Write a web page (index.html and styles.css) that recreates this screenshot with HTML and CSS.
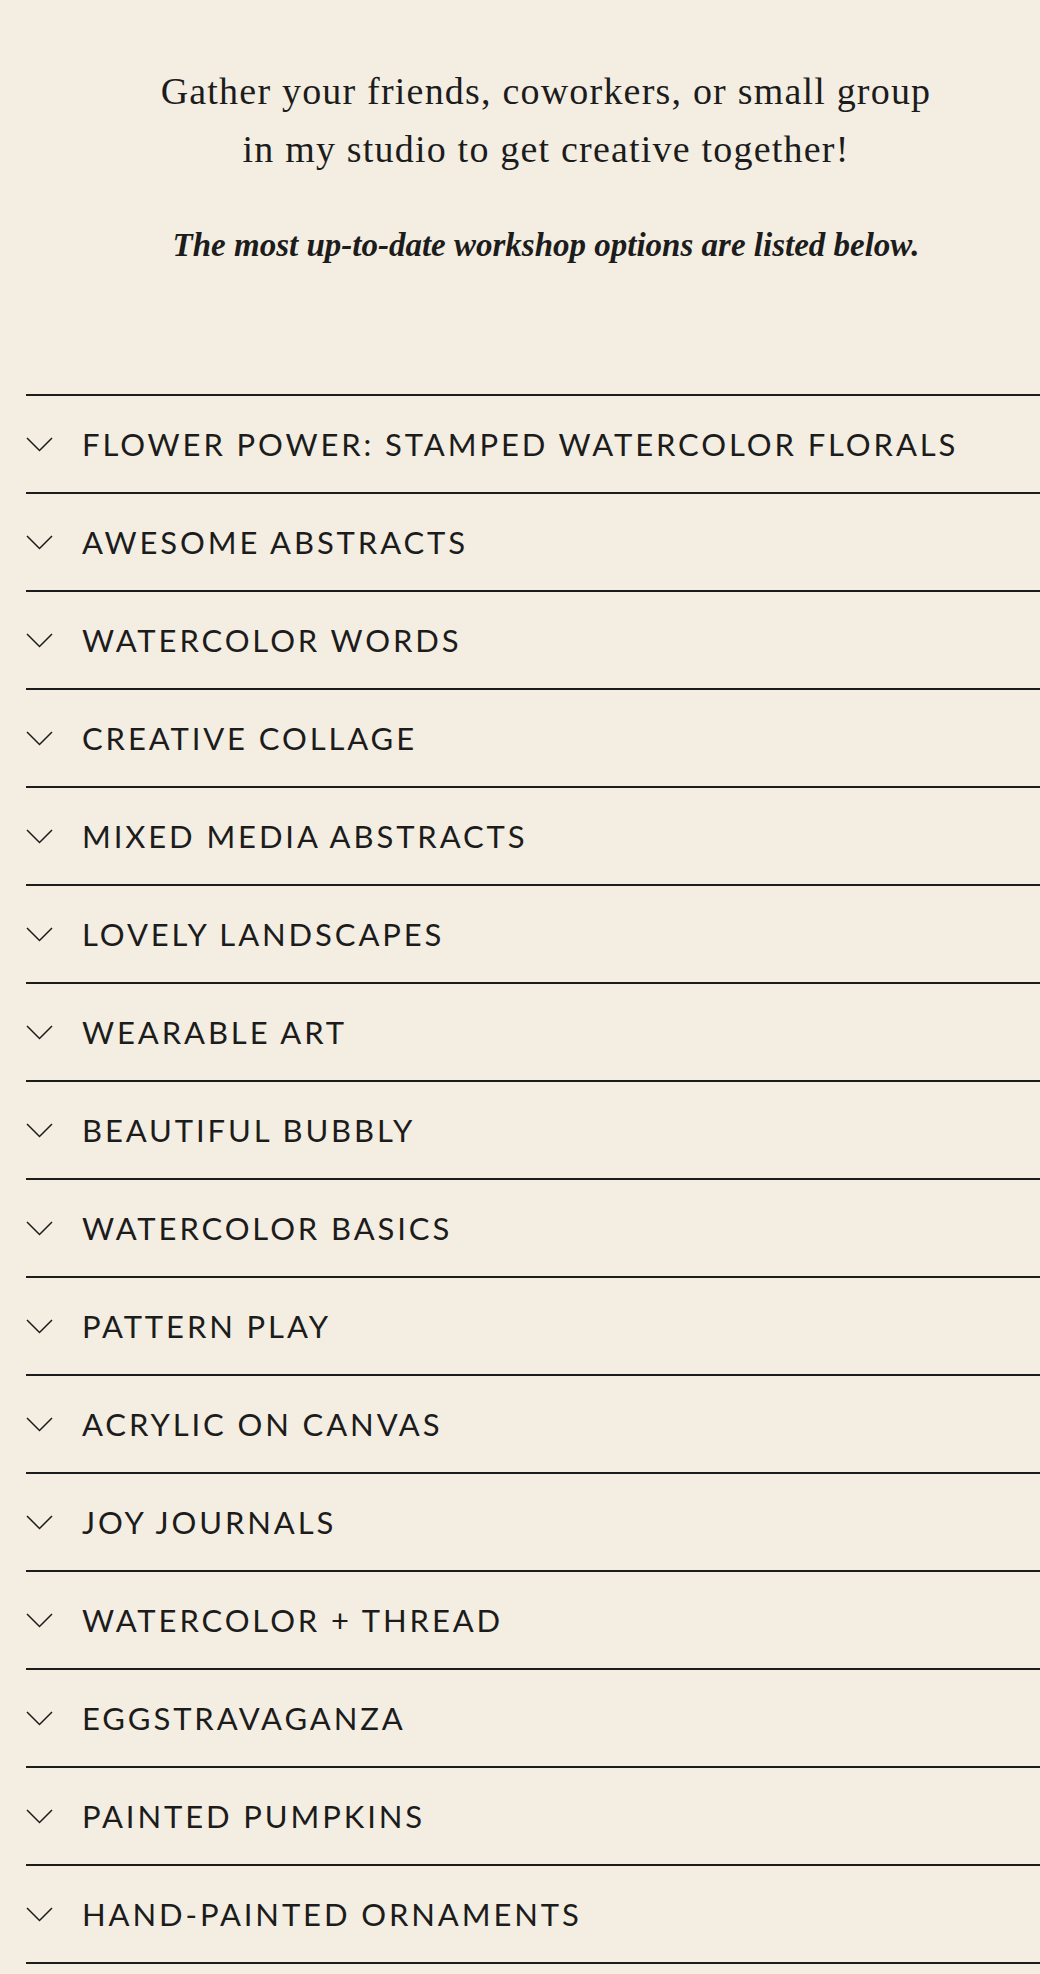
FILE: index.html
```html
<!DOCTYPE html>
<html lang="en">
<head>
  <meta charset="UTF-8" />
  <meta name="viewport" content="width=device-width, initial-scale=1.0" />
  <title>Group Workshops</title>
  <link rel="stylesheet" href="styles.css">
</head>
<body>
  <div class="page">
    <section class="intro">
      <p class="lead">Gather your friends, coworkers, or small group<br>in my studio to get creative together!</p>
      <p class="note">The most up-to-date workshop options are listed below.</p>
    </section>

    <ul class="workshops">
      <li class="workshop"><svg class="chevron" viewBox="0 0 27 15"><polyline points="1,1 13.5,13.5 26,1" /></svg><span>Flower Power: Stamped Watercolor Florals</span></li>
      <li class="workshop"><svg class="chevron" viewBox="0 0 27 15"><polyline points="1,1 13.5,13.5 26,1" /></svg><span>Awesome Abstracts</span></li>
      <li class="workshop"><svg class="chevron" viewBox="0 0 27 15"><polyline points="1,1 13.5,13.5 26,1" /></svg><span>Watercolor Words</span></li>
      <li class="workshop"><svg class="chevron" viewBox="0 0 27 15"><polyline points="1,1 13.5,13.5 26,1" /></svg><span>Creative Collage</span></li>
      <li class="workshop"><svg class="chevron" viewBox="0 0 27 15"><polyline points="1,1 13.5,13.5 26,1" /></svg><span>Mixed Media Abstracts</span></li>
      <li class="workshop"><svg class="chevron" viewBox="0 0 27 15"><polyline points="1,1 13.5,13.5 26,1" /></svg><span>Lovely Landscapes</span></li>
      <li class="workshop"><svg class="chevron" viewBox="0 0 27 15"><polyline points="1,1 13.5,13.5 26,1" /></svg><span>Wearable Art</span></li>
      <li class="workshop"><svg class="chevron" viewBox="0 0 27 15"><polyline points="1,1 13.5,13.5 26,1" /></svg><span>Beautiful Bubbly</span></li>
      <li class="workshop"><svg class="chevron" viewBox="0 0 27 15"><polyline points="1,1 13.5,13.5 26,1" /></svg><span>Watercolor Basics</span></li>
      <li class="workshop"><svg class="chevron" viewBox="0 0 27 15"><polyline points="1,1 13.5,13.5 26,1" /></svg><span>Pattern Play</span></li>
      <li class="workshop"><svg class="chevron" viewBox="0 0 27 15"><polyline points="1,1 13.5,13.5 26,1" /></svg><span>Acrylic on Canvas</span></li>
      <li class="workshop"><svg class="chevron" viewBox="0 0 27 15"><polyline points="1,1 13.5,13.5 26,1" /></svg><span>Joy Journals</span></li>
      <li class="workshop"><svg class="chevron" viewBox="0 0 27 15"><polyline points="1,1 13.5,13.5 26,1" /></svg><span>Watercolor + Thread</span></li>
      <li class="workshop"><svg class="chevron" viewBox="0 0 27 15"><polyline points="1,1 13.5,13.5 26,1" /></svg><span>Eggstravaganza</span></li>
      <li class="workshop"><svg class="chevron" viewBox="0 0 27 15"><polyline points="1,1 13.5,13.5 26,1" /></svg><span>Painted Pumpkins</span></li>
      <li class="workshop"><svg class="chevron" viewBox="0 0 27 15"><polyline points="1,1 13.5,13.5 26,1" /></svg><span>Hand-Painted Ornaments</span></li>
    </ul>
  </div>
</body>
</html>
```

FILE: styles.css
```css
html,
body {
  margin: 0;
  background-color: #f4eee2;
  overflow-x: hidden;
}

body {
  color: #1c1c1c;
}

.page {
  margin-left: 26px;
  width: 1040px;
}

.intro {
  text-align: center;
  padding-top: 62px;
  padding-bottom: 129px;
}

.lead {
  margin: 0;
  font-family: "Liberation Serif", "Times New Roman", serif;
  font-size: 38px;
  line-height: 58px;
  letter-spacing: 1.2px;
}

.note {
  margin: 47px 0 0;
  font-family: "Liberation Serif", "Times New Roman", serif;
  font-style: italic;
  font-weight: 700;
  font-size: 33px;
  line-height: 40px;
}

.workshops {
  list-style: none;
  margin: 0;
  padding: 0;
  border-bottom: 2px solid #1c1c1c;
}

.workshop {
  display: flex;
  align-items: center;
  gap: 29px;
  height: 96px;
  border-top: 2px solid #1c1c1c;
  font-family: Lato, "Liberation Sans", sans-serif;
  font-size: 31px;
  letter-spacing: 2.9px;
  text-transform: uppercase;
  cursor: pointer;
}

.chevron {
  flex: none;
  width: 27px;
  height: 15px;
  fill: none;
  stroke: #1c1c1c;
  stroke-width: 1.5;
}
```
